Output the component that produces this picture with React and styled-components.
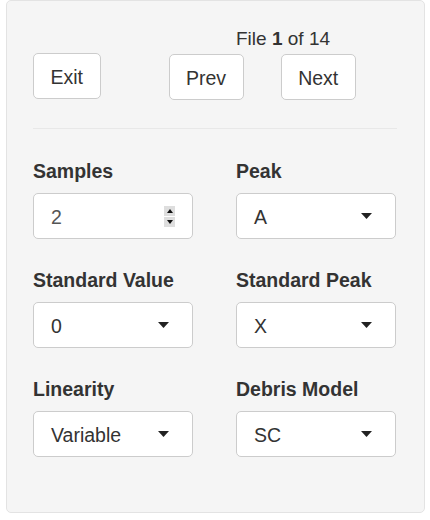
import React from "react"
import styled, { createGlobalStyle } from "styled-components"

const GlobalStyle = createGlobalStyle`
  html, body {
    margin: 0;
    padding: 0;
    background: #fff;
  }
  body {
    font-family: "Liberation Sans", Arial, sans-serif;
    color: #333;
  }
`

const fields = [
  { label: "Samples", value: "2", kind: "number" },
  { label: "Peak", value: "A" },
  { label: "Standard Value", value: "0" },
  { label: "Standard Peak", value: "X" },
  { label: "Linearity", value: "Variable" },
  { label: "Debris Model", value: "SC" },
]

const Caret = () => (
  <svg width="11" height="6" viewBox="0 0 11 6">
    <path d="M0 0 L11 0 L5.5 6 Z" fill="#222" />
  </svg>
)

const Spinner = () => (
  <SpinBox>
    <SpinHalf>
      <svg width="6" height="4" viewBox="0 0 6 4">
        <path d="M0 4 L6 4 L3 0 Z" fill="#111" />
      </svg>
    </SpinHalf>
    <SpinHalf>
      <svg width="6" height="4" viewBox="0 0 6 4">
        <path d="M0 0 L6 0 L3 4 Z" fill="#111" />
      </svg>
    </SpinHalf>
  </SpinBox>
)

const App = () => (
  <>
    <GlobalStyle />
    <Well>
      <FileInfo>
        File <b>1</b> of 14
      </FileInfo>
      <ButtonRow>
        <Button>Exit</Button>
        <Button gap={68}>Prev</Button>
        <Button gap={37}>Next</Button>
      </ButtonRow>
      <Divider />
      <FieldGrid>
        {fields.map(f => (
          <Field key={f.label}>
            <Label>{f.label}</Label>
            {f.kind === "number" ? (
              <Control spin>
                <Value muted>{f.value}</Value>
                <Spinner />
              </Control>
            ) : (
              <Control>
                <Value>{f.value}</Value>
                <Caret />
              </Control>
            )}
          </Field>
        ))}
      </FieldGrid>
    </Well>
  </>
)

const Well = styled.div`
  box-sizing: border-box;
  margin-left: 6px;
  width: 419px;
  height: 513px;
  background: #f5f5f5;
  border: 1px solid #e3e3e3;
  border-radius: 5px;
  padding: 24px 25px 0 26px;
`

const FileInfo = styled.div`
  font-size: 19px;
  line-height: 28px;
  padding-left: 203px;
  b {
    font-weight: bold;
  }
`

const ButtonRow = styled.div`
  display: flex;
  align-items: flex-start;
`

const Button = styled.button`
  box-sizing: border-box;
  height: 46px;
  margin-left: ${p => p.gap || 0}px;
  margin-top: ${p => (p.gap ? 1 : 0)}px;
  padding: 2px 16.5px 0;
  background: #fff;
  border: 1px solid #ccc;
  border-radius: 5px;
  font-family: "Liberation Sans", Arial, sans-serif;
  font-size: 19.5px;
  color: #333;
`

const Divider = styled.div`
  height: 1px;
  background: #e8e8e8;
  margin: 28px 2px 28px 0;
`

const FieldGrid = styled.div`
  display: grid;
  grid-template-columns: 160px 160px;
  column-gap: 43px;
  row-gap: 27px;
`

const Field = styled.div`
  display: flex;
  flex-direction: column;
`

const Label = styled.div`
  font-size: 19.5px;
  line-height: 28px;
  font-weight: bold;
  margin-bottom: 8px;
`

const Control = styled.div`
  box-sizing: border-box;
  height: 46px;
  display: flex;
  align-items: center;
  justify-content: space-between;
  padding: 0 ${p => (p.spin ? 17 : 23)}px 0 17px;
  background: #fff;
  border: 1px solid #ccc;
  border-radius: 5px;
`

const Value = styled.span`
  font-size: 19.5px;
  line-height: 28px;
  color: ${p => (p.muted ? "#555" : "#333")};
  margin-top: 2px;
`

const SpinBox = styled.div`
  display: flex;
  flex-direction: column;
  gap: 1px;
  width: 11px;
  margin-top: 1px;
`

const SpinHalf = styled.div`
  height: 10px;
  background: #dedede;
  display: flex;
  align-items: center;
  justify-content: center;
`

export default App
